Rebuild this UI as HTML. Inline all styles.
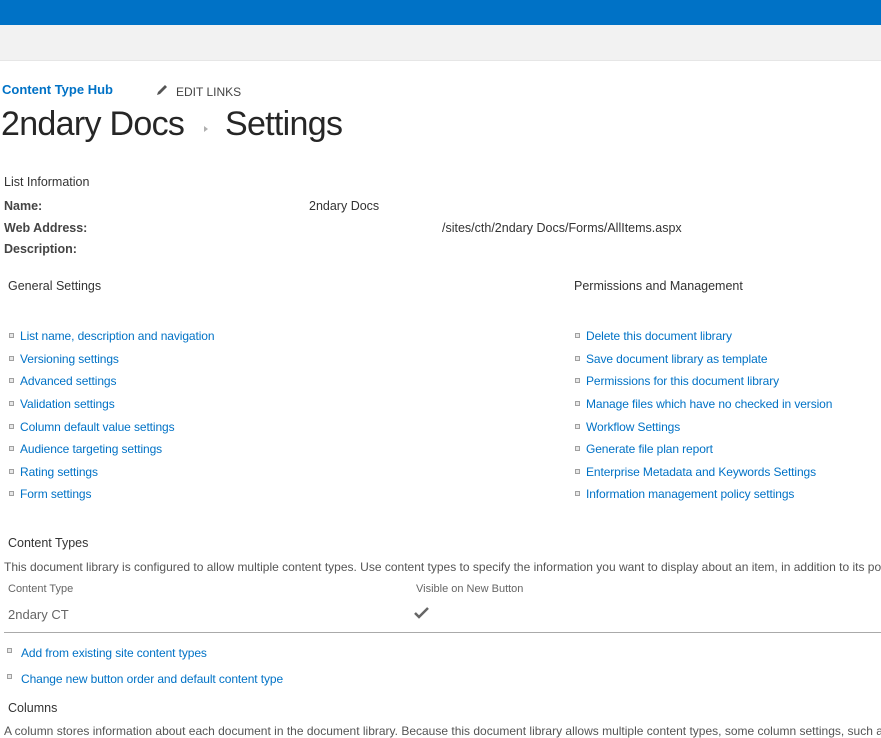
<!DOCTYPE html>
<html><head><style>
body{margin:0;width:881px;height:732px;overflow:hidden;position:relative;font-family:"Liberation Sans",sans-serif;background:#fff;color:#444}
.a{position:absolute;white-space:nowrap}
.l{color:#0072c6;font-size:12px;letter-spacing:-0.1px}
.b{position:absolute;width:3px;height:3px;border:1px solid #a0a0a0;background:#e8e8e8}
.s{font-size:12.5px;color:#333}
.clip{overflow:hidden}
</style></head><body>
<div class="a" style="left:0;top:0;width:881px;height:25px;background:#0072c6"></div>
<div class="a" style="left:0;top:25px;width:881px;height:35px;background:#f2f2f2;border-bottom:1px solid #e6e6e6"></div>
<div class="a" style="left:2px;top:82px;font-size:13px;font-weight:bold;color:#0072c6">Content Type Hub</div>
<svg class="a" style="left:156px;top:84px" width="12" height="12" viewBox="0 0 12 12"><path d="M1 11 L2 8 L9 1 L11 3 L4 10 Z" fill="#555"/></svg>
<div class="a" style="left:176px;top:85px;font-size:12px;color:#444">EDIT LINKS</div>
<div class="a" style="left:1px;top:105px;font-size:34px;color:#262626;letter-spacing:-0.7px">2ndary Docs</div>
<div class="a" style="left:204px;top:126px;width:0;height:0;border-left:4px solid #b0b0b0;border-top:3.5px solid transparent;border-bottom:3.5px solid transparent"></div>
<div class="a" style="left:225px;top:105px;font-size:34px;color:#262626;letter-spacing:-0.7px">Settings</div>
<div class="a s" style="left:4px;top:175px">List Information</div>
<div class="a" style="left:4px;top:199px;font-size:12.5px;font-weight:bold;color:#444">Name:</div>
<div class="a" style="left:4px;top:221px;font-size:12.5px;font-weight:bold;color:#444">Web Address:</div>
<div class="a" style="left:4px;top:242px;font-size:12.5px;font-weight:bold;color:#444">Description:</div>
<div class="a s" style="left:309px;top:199px">2ndary Docs</div>
<div class="a s" style="left:442px;top:221px">/sites/cth/2ndary Docs/Forms/AllItems.aspx</div>
<div class="a s" style="left:8px;top:279px">General Settings</div>
<div class="a s" style="left:574px;top:279px">Permissions and Management</div>

<div class="b" style="left:9px;top:333px"></div><div class="a l" style="left:20px;top:329px">List name, description and navigation</div>
<div class="b" style="left:9px;top:356px"></div><div class="a l" style="left:20px;top:352px">Versioning settings</div>
<div class="b" style="left:9px;top:378px"></div><div class="a l" style="left:20px;top:374px">Advanced settings</div>
<div class="b" style="left:9px;top:401px"></div><div class="a l" style="left:20px;top:397px">Validation settings</div>
<div class="b" style="left:9px;top:424px"></div><div class="a l" style="left:20px;top:420px">Column default value settings</div>
<div class="b" style="left:9px;top:446px"></div><div class="a l" style="left:20px;top:442px">Audience targeting settings</div>
<div class="b" style="left:9px;top:469px"></div><div class="a l" style="left:20px;top:465px">Rating settings</div>
<div class="b" style="left:9px;top:491px"></div><div class="a l" style="left:20px;top:487px">Form settings</div>

<div class="b" style="left:575px;top:333px"></div><div class="a l" style="left:586px;top:329px">Delete this document library</div>
<div class="b" style="left:575px;top:356px"></div><div class="a l" style="left:586px;top:352px">Save document library as template</div>
<div class="b" style="left:575px;top:378px"></div><div class="a l" style="left:586px;top:374px">Permissions for this document library</div>
<div class="b" style="left:575px;top:401px"></div><div class="a l" style="left:586px;top:397px">Manage files which have no checked in version</div>
<div class="b" style="left:575px;top:424px"></div><div class="a l" style="left:586px;top:420px">Workflow Settings</div>
<div class="b" style="left:575px;top:446px"></div><div class="a l" style="left:586px;top:442px">Generate file plan report</div>
<div class="b" style="left:575px;top:469px"></div><div class="a l" style="left:586px;top:465px">Enterprise Metadata and Keywords Settings</div>
<div class="b" style="left:575px;top:491px"></div><div class="a l" style="left:586px;top:487px">Information management policy settings</div>

<div class="a s" style="left:8px;top:536px">Content Types</div>
<div class="a clip" style="left:4px;top:560px;width:877px;font-size:12px;color:#555">This document library is configured to allow multiple content types. Use content types to specify the information you want to display about an item, in addition to its policies</div>
<div class="a" style="left:8px;top:583px;font-size:11px;color:#666">Content Type</div>
<div class="a" style="left:416px;top:583px;font-size:11px;color:#666">Visible on New Button</div>
<div class="a" style="left:8px;top:607px;font-size:13px;color:#666">2ndary CT</div>
<svg class="a" style="left:414px;top:606px" width="16" height="14" viewBox="0 0 16 14"><path d="M1 7 L5 11 L14 2" stroke="#666" stroke-width="2.5" fill="none"/></svg>
<div class="a" style="left:4px;top:632px;width:877px;height:1px;background:#aaa"></div>
<div class="b" style="left:7px;top:648px"></div><div class="a l" style="left:21px;top:646px">Add from existing site content types</div>
<div class="b" style="left:7px;top:674px"></div><div class="a l" style="left:21px;top:672px">Change new button order and default content type</div>
<div class="a s" style="left:8px;top:701px">Columns</div>
<div class="a clip" style="left:4px;top:724px;width:877px;font-size:12px;color:#555">A column stores information about each document in the document library. Because this document library allows multiple content types, some column settings, such as whether</div>
</body></html>
